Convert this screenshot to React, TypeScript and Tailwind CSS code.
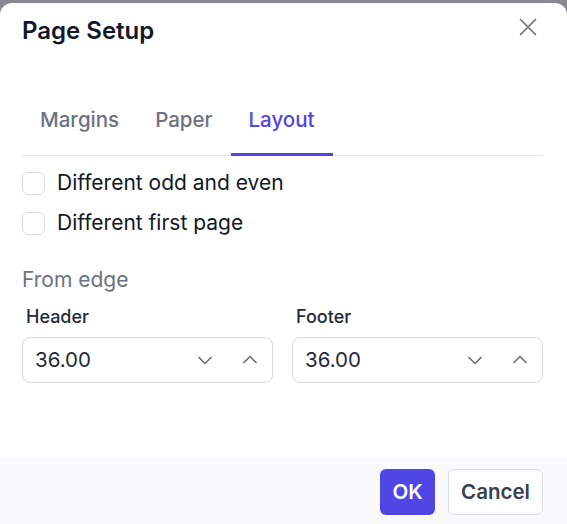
import React from "react";

function ChevronDown() {
  return (
    <svg width="16" height="16" viewBox="0 0 16 16" fill="none" stroke="#6b7280" strokeWidth="1.7" strokeLinecap="round" strokeLinejoin="round">
      <path d="M2 5.5l6 6 6-6" />
    </svg>
  );
}
function ChevronUp() {
  return (
    <svg width="16" height="16" viewBox="0 0 16 16" fill="none" stroke="#6b7280" strokeWidth="1.7" strokeLinecap="round" strokeLinejoin="round">
      <path d="M2 10.5l6-6 6 6" />
    </svg>
  );
}

function NumberField({ label, value }: { label: string; value: string }) {
  return (
    <div className="flex flex-col">
      <div className="pl-[4px] text-[18px] leading-[24px] font-medium text-[#1f2937]">{label}</div>
      <div className="mt-[8px] h-[46px] rounded-[8px] border border-[#d9dce1] bg-white flex items-center pl-[12px] pr-[14px]">
        <span className="flex-1 text-[20.5px] text-[#1f2937]">{value}</span>
        <div className="flex items-center gap-[29px]">
          <ChevronDown />
          <ChevronUp />
        </div>
      </div>
    </div>
  );
}

function Check({ label }: { label: string }) {
  return (
    <label className="flex items-center h-[40px]">
      <span className="w-[23px] h-[23px] rounded-[6px] border border-[#d9dce1] bg-white" />
      <span className="ml-[12px] text-[21px] text-[#111827]">{label}</span>
    </label>
  );
}

export default function App() {
  return (
    <div className="w-[567px] h-[524px] bg-[#878a93] pt-[3px] overflow-hidden" style={{ fontFamily: "Inter, 'Noto Sans', sans-serif" }}>
      <div className="h-[521px] bg-white rounded-t-[12px] flex flex-col">
        <div className="flex-1 pl-[22px] pr-[24px]">
          <div className="flex items-start justify-between pt-[14px]">
            <h2 className="text-[24px] leading-[28px] font-semibold text-[#111827]">Page Setup</h2>
            <svg width="24" height="24" viewBox="0 0 24 24" className="-mt-[2px] mr-[3px]" fill="none" stroke="#6b7280" strokeWidth="1.6" strokeLinecap="round">
              <path d="M4.5 4.5l15 15M19.5 4.5l-15 15" />
            </svg>
          </div>
          <div className="mt-[61px] flex border-b border-[#e5e7eb]">
            <div className="px-[18px] pb-[19px] text-[20.5px] leading-[28px] font-medium text-[#6b7280] border-b-[3px] border-transparent -mb-[1px]">Margins</div>
            <div className="px-[18px] pb-[19px] text-[20.5px] leading-[28px] font-medium text-[#6b7280] border-b-[3px] border-transparent -mb-[1px]">Paper</div>
            <div className="px-[18px] pb-[19px] text-[20.5px] leading-[28px] font-medium text-[#4f46e5] border-b-[3px] border-[#4f46e5] -mb-[1px]">Layout</div>
          </div>
          <div className="mt-[7px] flex flex-col">
            <Check label="Different odd and even" />
            <Check label="Different first page" />
          </div>
          <div className="mt-[24px] text-[21px] leading-[26px] text-[#6b7280]">From edge</div>
          <div className="mt-[12px] grid grid-cols-2 gap-[19px]">
            <NumberField label="Header" value="36.00" />
            <NumberField label="Footer" value="36.00" />
          </div>
        </div>
        <div className="h-[67px] bg-[#f9fafb] flex items-start justify-end gap-[13px] pt-[12px] pr-[24px]">
          <button className="h-[46px] w-[55px] rounded-[6px] bg-[#4f46e5] text-white text-[20.5px] font-semibold">OK</button>
          <button className="h-[46px] w-[95px] rounded-[6px] bg-white border border-[#d9dce1] text-[#374151] text-[20.5px] font-semibold">Cancel</button>
        </div>
      </div>
    </div>
  );
}
